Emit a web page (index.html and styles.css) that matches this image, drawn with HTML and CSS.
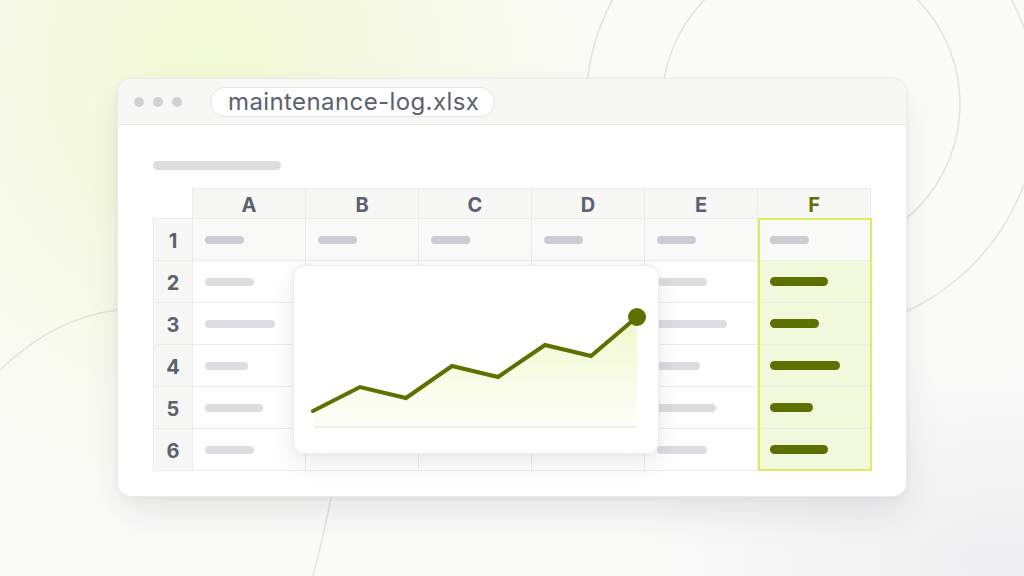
FILE: index.html
```html
<!DOCTYPE html>
<html lang="en">
<head>
    <meta charset="UTF-8">
    <meta name="viewport" content="width=device-width, initial-scale=1.0">
    <title>maintenance-log.xlsx</title>
    <link rel="stylesheet" href="styles.css">
</head>
<body>

    <svg class="backdrop" width="1024" height="576" viewBox="0 0 1024 576" aria-hidden="true">
        <circle cx="812" cy="106" r="226" />
        <circle cx="811" cy="104" r="149" />
        <path d="M -4 374 Q 52 318 117 310 T 200 302" />
        <path d="M 338 460 Q 328 520 312 580" />
    </svg>

    <main class="stage">
        <section class="window">
            <header class="titlebar">
                <div class="dots"><span></span><span></span><span></span></div>
                <div class="filename">maintenance-log.xlsx</div>
            </header>

            <div class="sheet-body">
                <div class="title-bar-ph"></div>

                <div class="sheet">
                    <div class="grid">
                        <div class="corner"></div>
                        <div class="col-head">A</div>
                        <div class="col-head">B</div>
                        <div class="col-head">C</div>
                        <div class="col-head">D</div>
                        <div class="col-head">E</div>
                        <div class="col-head col-head--hl">F</div>

                        <div class="row-num">1</div>
                        <div class="cell cell--first"><i class="bar bar--dark" style="width:39px"></i></div>
                        <div class="cell cell--first"><i class="bar bar--dark" style="width:39px"></i></div>
                        <div class="cell cell--first"><i class="bar bar--dark" style="width:39px"></i></div>
                        <div class="cell cell--first"><i class="bar bar--dark" style="width:39px"></i></div>
                        <div class="cell cell--first"><i class="bar bar--dark" style="width:39px"></i></div>
                        <div class="cell cell--first"><i class="bar bar--dark" style="width:39px"></i></div>

                        <div class="row-num">2</div>
                        <div class="cell"><i class="bar" style="width:49px"></i></div>
                        <div class="cell"><i class="bar" style="width:56px"></i></div>
                        <div class="cell"><i class="bar" style="width:44px"></i></div>
                        <div class="cell"><i class="bar" style="width:62px"></i></div>
                        <div class="cell"><i class="bar" style="width:50px"></i></div>
                        <div class="cell cell--hl"><i class="bar bar--olive" style="width:58px"></i></div>

                        <div class="row-num">3</div>
                        <div class="cell"><i class="bar" style="width:70px"></i></div>
                        <div class="cell"><i class="bar" style="width:48px"></i></div>
                        <div class="cell"><i class="bar" style="width:60px"></i></div>
                        <div class="cell"><i class="bar" style="width:40px"></i></div>
                        <div class="cell"><i class="bar" style="width:70px"></i></div>
                        <div class="cell cell--hl"><i class="bar bar--olive" style="width:49px"></i></div>

                        <div class="row-num">4</div>
                        <div class="cell"><i class="bar" style="width:43px"></i></div>
                        <div class="cell"><i class="bar" style="width:62px"></i></div>
                        <div class="cell"><i class="bar" style="width:52px"></i></div>
                        <div class="cell"><i class="bar" style="width:58px"></i></div>
                        <div class="cell"><i class="bar" style="width:43px"></i></div>
                        <div class="cell cell--hl"><i class="bar bar--olive" style="width:70px"></i></div>

                        <div class="row-num">5</div>
                        <div class="cell"><i class="bar" style="width:58px"></i></div>
                        <div class="cell"><i class="bar" style="width:44px"></i></div>
                        <div class="cell"><i class="bar" style="width:66px"></i></div>
                        <div class="cell"><i class="bar" style="width:50px"></i></div>
                        <div class="cell"><i class="bar" style="width:59px"></i></div>
                        <div class="cell cell--hl"><i class="bar bar--olive" style="width:43px"></i></div>

                        <div class="row-num">6</div>
                        <div class="cell"><i class="bar" style="width:49px"></i></div>
                        <div class="cell"><i class="bar" style="width:54px"></i></div>
                        <div class="cell"><i class="bar" style="width:38px"></i></div>
                        <div class="cell"><i class="bar" style="width:66px"></i></div>
                        <div class="cell"><i class="bar" style="width:50px"></i></div>
                        <div class="cell cell--hl"><i class="bar bar--olive" style="width:58px"></i></div>
                    </div>

                    <!-- outline of selected column F -->
                    <div class="hl-frame"></div>

                    <div class="chart-card">
                        <svg class="chart" width="366" height="189" viewBox="0 0 366 189">
                            <defs>
                                <linearGradient id="area" x1="0" y1="0" x2="0" y2="1">
                                    <stop offset="0" stop-color="#eef8c6" stop-opacity="0.95" />
                                    <stop offset="1" stop-color="#fbfdf2" stop-opacity="0.6" />
                                </linearGradient>
                            </defs>
                            <path class="chart__area" d="M 20 146 L 67 122 L 113 133 L 159 101 L 205 112 L 252 80 L 298 91 L 344 52 L 344 162 L 20 162 Z" />
                            <line class="chart__base" x1="21" y1="162" x2="344" y2="162" />
                            <polyline class="chart__line" points="20,146 67,122 113,133 159,101 205,112 252,80 298,91 344,52" />
                            <circle class="chart__dot" cx="344" cy="52" r="9" />
                        </svg>
                    </div>
                </div>
            </div>
        </section>
    </main>

</body>
</html>
```

FILE: styles.css
```css
:root {
    --clr-ink: #5b6170;
    --clr-olive: #5b7100;
    --clr-lime: #d8ef62;
    --clr-lime-bg: #f2f8dc;
    --clr-line: #ebebe8;
    --clr-soft: #f7f7f5;
    --clr-bar: #dcdde1;
    --clr-bar-dark: #c9ccd3;
}
* {
    margin: 0;
    box-sizing: border-box;
}
html, body {
    width: 1024px;
    height: 576px;
    overflow: hidden;
}
body {
    position: relative;
    font-family: Inter, "Noto Sans", sans-serif;
    color: var(--clr-ink);
    background:
        radial-gradient(ellipse 420px 460px at 210px 70px, #f2f9d4 0, rgba(244, 249, 220, 0.75) 40%, rgba(250, 250, 250, 0) 100%),
        radial-gradient(ellipse at 1000px 560px, #efeff1 0, rgba(250, 250, 250, 0) 380px),
        #fbfbfa;
}
.backdrop {
    position: absolute;
    inset: 0;
    fill: none;
    stroke: #e2e2e0;
    stroke-width: 1.5;
}

.stage {
    position: relative;
    padding: 78px 0 0 117px;
}
.window {
    width: 790px;
    height: 419px;
    background: #fff;
    border: 1px solid #ebebe9;
    border-radius: 14px;
    overflow: hidden;
    box-shadow: 0 18px 40px -6px rgba(40, 44, 60, 0.12), 0 2px 6px rgba(40, 44, 60, 0.04);
}

.titlebar {
    display: flex;
    align-items: center;
    height: 46px;
    padding-left: 16px;
    background: var(--clr-soft);
    border-bottom: 1px solid #e9e9e7;
}
.dots {
    display: flex;
    gap: 9px;
}
.dots span {
    width: 10px;
    height: 10px;
    border-radius: 50%;
    background: #d0d1d6;
}
.filename {
    margin-left: 28px;
    height: 30px;
    padding: 0 15px 0 17px;
    display: flex;
    align-items: center;
    font-size: 24px;
    letter-spacing: 0.4px;
    background: #fff;
    border: 1px solid #e3e3e1;
    border-radius: 15px;
}

.sheet-body {
    padding: 36px 0 0 35px;
}
.title-bar-ph {
    width: 128px;
    height: 9px;
    border-radius: 5px;
    background: var(--clr-bar);
}

.sheet {
    position: relative;
    margin-top: 18px;
    width: 718px;
}
.grid {
    display: grid;
    grid-template-columns: 40px repeat(6, 113px);
    grid-template-rows: 31px repeat(6, 42px);
}
.corner {
    border-right: 1px solid var(--clr-line);
    border-bottom: 1px solid var(--clr-line);
}
.col-head,
.row-num {
    display: flex;
    align-items: center;
    justify-content: center;
    font-size: 20px;
    font-weight: 700;
    background: var(--clr-soft);
    border-right: 1px solid var(--clr-line);
    border-bottom: 1px solid var(--clr-line);
}
.col-head {
    border-top: 1px solid var(--clr-line);
    padding-top: 2px;
}
.col-head--hl {
    color: var(--clr-olive);
}
.row-num {
    border-left: 1px solid var(--clr-line);
    padding-top: 2px;
}
.cell {
    display: flex;
    align-items: center;
    padding-left: 12px;
    border-right: 1px solid var(--clr-line);
    border-bottom: 1px solid var(--clr-line);
}
.cell--first {
    background: #f9f9f8;
}
.cell--hl {
    background: var(--clr-lime-bg);
}

.bar {
    display: block;
    height: 8px;
    border-radius: 4px;
    background: var(--clr-bar);
}
.bar--dark {
    background: var(--clr-bar-dark);
}
.bar--olive {
    height: 9px;
    border-radius: 5px;
    background: var(--clr-olive);
}

.hl-frame {
    position: absolute;
    left: 605px;
    top: 30px;
    width: 114px;
    height: 253px;
    border: 2px solid var(--clr-lime);
    pointer-events: none;
}

.chart-card {
    position: absolute;
    left: 140px;
    top: 77px;
    width: 366px;
    height: 189px;
    background: #fff;
    border: 1px solid #ececea;
    border-radius: 12px;
    box-shadow: 0 10px 26px rgba(40, 44, 60, 0.09), 0 0 10px rgba(40, 44, 60, 0.04);
}
.chart {
    display: block;
    margin: -1px;
}
.chart__area {
    fill: url(#area);
}
.chart__base {
    stroke: #e7e7e4;
    stroke-width: 1.5;
}
.chart__line {
    fill: none;
    stroke: var(--clr-olive);
    stroke-width: 4;
    stroke-linejoin: miter;
    stroke-linecap: round;
}
.chart__dot {
    fill: var(--clr-olive);
}
```
